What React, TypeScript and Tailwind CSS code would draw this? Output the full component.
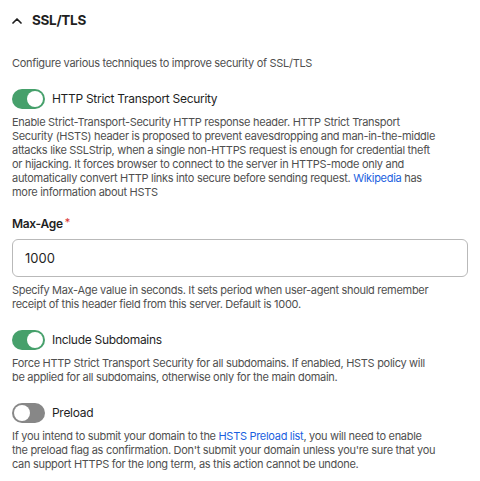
import { useState } from "react";

function Toggle({
  checked,
  onChange,
}: {
  checked: boolean;
  onChange: () => void;
}) {
  return (
    <button
      type="button"
      onClick={onChange}
      className={
        checked
          ? "relative h-[20px] w-[33px] shrink-0 rounded-full bg-[#46a06b]"
          : "relative h-[20px] w-[33px] shrink-0 rounded-full bg-[#878787]"
      }
    >
      <span
        className={
          checked
            ? "absolute top-[2px] left-[15px] h-[16px] w-[16px] rounded-full bg-white"
            : "absolute top-[2px] left-[2px] h-[16px] w-[16px] rounded-full bg-white"
        }
      />
    </button>
  );
}

export default function App() {
  const [hsts, setHsts] = useState(true);
  const [subdomains, setSubdomains] = useState(true);
  const [preload, setPreload] = useState(false);
  const [maxAge, setMaxAge] = useState("1000");

  return (
    <div
      className="w-[480px] h-[481px] bg-white px-3 pt-2 text-[#4f4f4f]"
      style={{ fontFamily: "Inter, 'Noto Sans', sans-serif" }}
    >
      <div className="flex items-center gap-[10px] h-6">
        <svg
          width="10"
          height="6"
          viewBox="0 0 10 6"
          fill="none"
          stroke="#1f1f1f"
          strokeWidth="1.7"
          strokeLinecap="round"
          strokeLinejoin="round"
          className="mt-[1px]"
        >
          <path d="M1 5 L5 1 L9 5" />
        </svg>
        <h2 className="text-[13.5px] font-bold tracking-[-0.3px] text-[#1f1f1f]">
          SSL/TLS
        </h2>
      </div>

      <p className="mt-6 text-[11px] leading-[14px] tracking-[-0.3px]">
        Configure various techniques to improve security of SSL/TLS
      </p>

      <div className="mt-[19px] flex items-center gap-[7px] h-[20px]">
        <Toggle checked={hsts} onChange={() => setHsts(!hsts)} />
        <span className="text-[12px] tracking-[-0.3px] text-[#1f1f1f]">
          HTTP Strict Transport Security
        </span>
      </div>
      <p className="mt-[6px] w-[428px] text-[11px] leading-[14px] tracking-[-0.3px]">
        Enable Strict-Transport-Security HTTP response header. HTTP Strict
        Transport Security (HSTS) header is proposed to prevent eavesdropping
        and man-in-the-middle attacks like SSLStrip, when a single non-HTTPS
        request is enough for credential theft or hijacking. It forces browser
        to connect to the server in HTTPS-mode only and automatically convert
        HTTP links into secure before sending request.{" "}
        <a className="text-[#1a5fe0]">Wikipedia</a> has more information about
        HSTS
      </p>

      <div className="mt-[16px] flex items-center h-[18px]">
        <span className="text-[12px] font-semibold tracking-[-0.3px] text-[#1f1f1f]">
          Max-Age
        </span>
        <span className="ml-[2px] -mt-[4px] text-[11px] text-[#d9322e]">*</span>
      </div>
      <input
        value={maxAge}
        onChange={(e) => setMaxAge(e.target.value)}
        className="mt-[6px] block h-[38px] w-[456px] rounded-[6px] border border-[#b9b9b9] px-3 text-[13px] text-[#1f1f1f] outline-none"
      />
      <p className="mt-[6px] w-[428px] text-[11px] leading-[14px] tracking-[-0.3px]">
        Specify Max-Age value in seconds. It sets period when user-agent should
        remember receipt of this header field from this server. Default is
        1000.
      </p>

      <div className="mt-[19px] flex items-center gap-[7px] h-[20px]">
        <Toggle
          checked={subdomains}
          onChange={() => setSubdomains(!subdomains)}
        />
        <span className="text-[12px] tracking-[-0.3px] text-[#1f1f1f]">
          Include Subdomains
        </span>
      </div>
      <p className="mt-[6px] w-[428px] text-[11px] leading-[14px] tracking-[-0.3px]">
        Force HTTP Strict Transport Security for all subdomains. If enabled,
        HSTS policy will be applied for all subdomains, otherwise only for the
        main domain.
      </p>

      <div className="mt-[19px] flex items-center gap-[7px] h-[20px]">
        <Toggle checked={preload} onChange={() => setPreload(!preload)} />
        <span className="text-[12px] tracking-[-0.3px] text-[#1f1f1f]">
          Preload
        </span>
      </div>
      <p className="mt-[6px] w-[428px] text-[11px] leading-[14px] tracking-[-0.3px]">
        If you intend to submit your domain to the{" "}
        <a className="text-[#1a5fe0]">HSTS Preload list</a>, you will need to
        enable the preload flag as confirmation. Don't submit your domain
        unless you're sure that you can support HTTPS for the long term, as
        this action cannot be undone.
      </p>
    </div>
  );
}
